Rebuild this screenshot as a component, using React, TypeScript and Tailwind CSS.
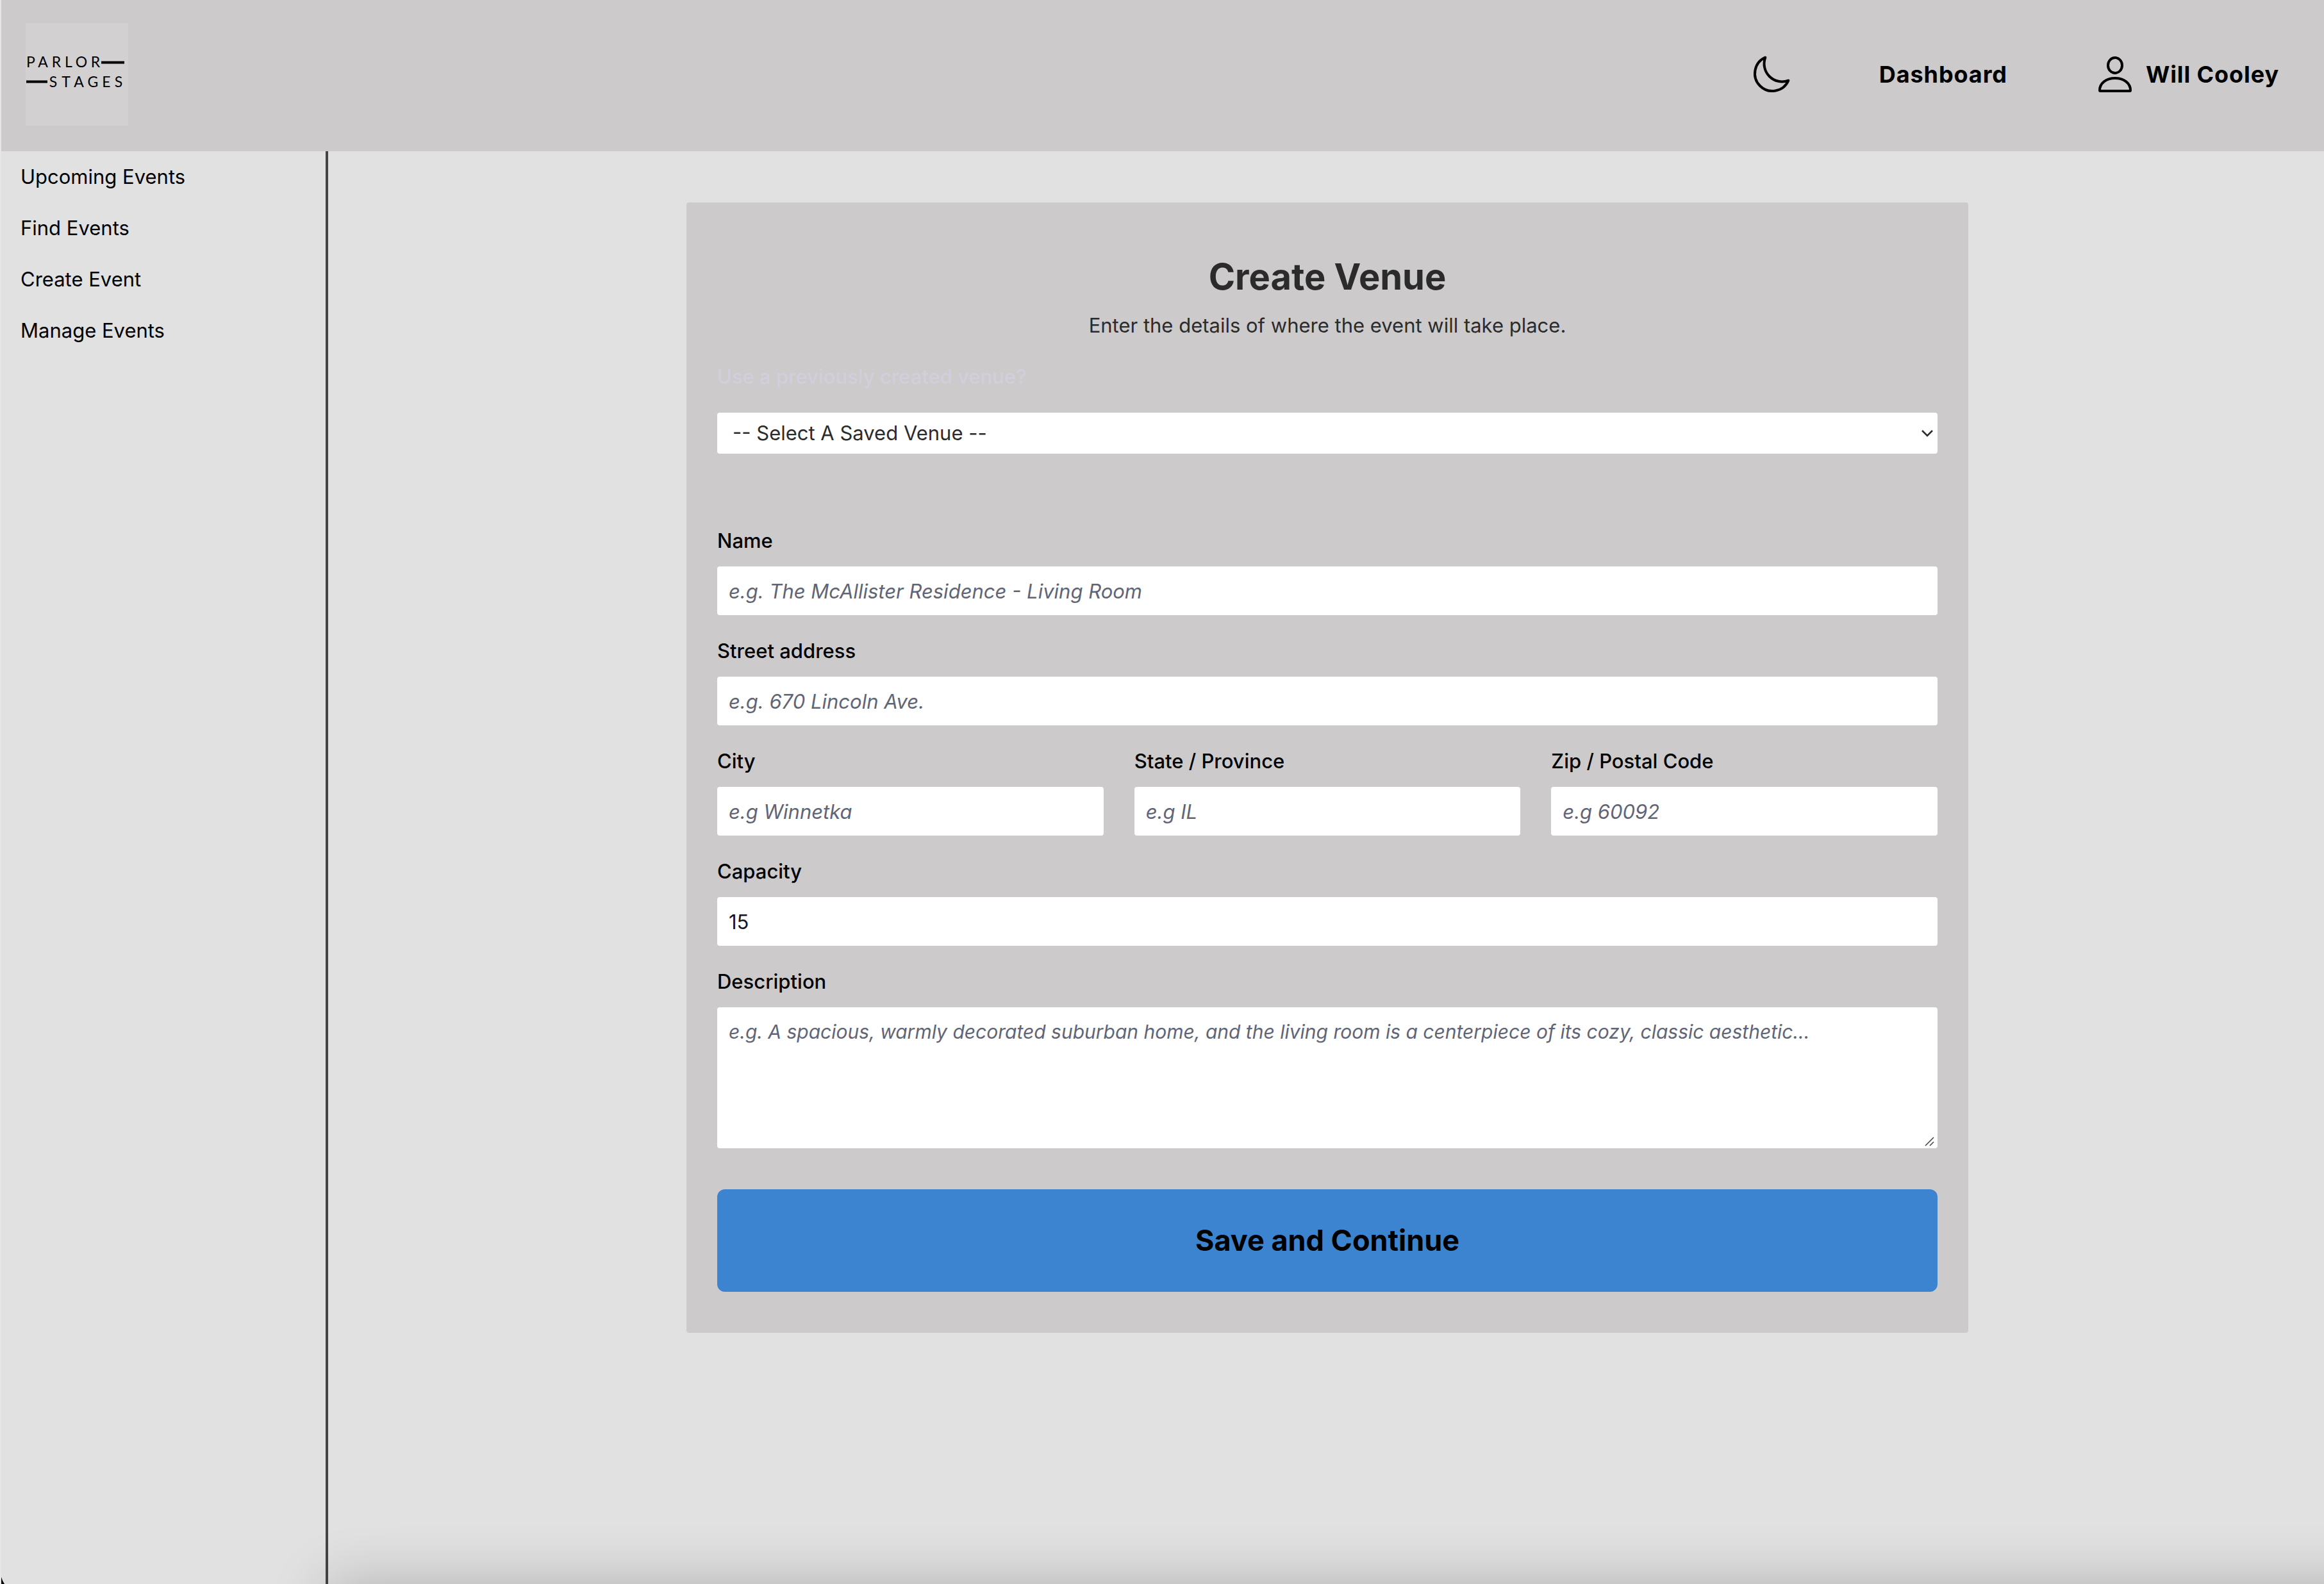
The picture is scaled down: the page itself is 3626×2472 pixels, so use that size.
import React, { useId } from "react";

const label = "block text-[31px] leading-[48px] font-medium text-black";
const box =
  "block w-full rounded bg-white px-[18px] leading-[48px] text-[#15152a] placeholder:italic placeholder:text-[#5f6577] placeholder:opacity-100 outline-none";

function Field(props: { title: string; placeholder?: string; value?: string }) {
  const id = useId();
  return (
    <div>
      <label htmlFor={id} className={label}>
        {props.title}
      </label>
      <input id={id} type="text" placeholder={props.placeholder} defaultValue={props.value} className={`mt-4 h-[76px] text-[31px] ${box}`} />
    </div>
  );
}

function Logo() {
  return (
    <svg viewBox="0 0 160 160" className="size-40 bg-[#d2d0d1]" role="img" aria-label="Parlor Stages">
      <g fontFamily="Lato, sans-serif" fontSize="23" fill="#000">
        {["P", "A", "R", "L", "O", "R"].map((c, i) => (
          <text key={i} x={[8, 27, 48, 67, 87, 109][i]} y="69" textAnchor="middle">{c}</text>
        ))}
        {["S", "T", "A", "G", "E", "S"].map((c, i) => (
          <text key={i} x={[43, 63, 83, 105, 126, 145][i]} y="100" textAnchor="middle">{c}</text>
        ))}
      </g>
      <path d="M118 61.500H154M1 91.500H34" stroke="#000" strokeWidth="4" />
    </svg>
  );
}

function MoonIcon() {
  return (
    <svg viewBox="0 0 64 64" className="size-16" fill="none" stroke="#000" strokeWidth="4" strokeLinecap="round" strokeLinejoin="round" aria-hidden="true">
      <path d="M22.300 5.700A27.300 27.300 0 1 0 58.300 41.700A28 28 0 0 1 22.300 5.700Z" />
    </svg>
  );
}

function UserIcon() {
  return (
    <svg viewBox="0 0 64 64" className="size-16" fill="none" stroke="#000" strokeWidth="4" strokeLinejoin="round" aria-hidden="true">
      <ellipse cx="32" cy="18" rx="11" ry="12" />
      <path d="M8 57C8 46 18 38 32 38S56 46 56 57Q56 58 55 58H9Q8 58 8 57Z" />
    </svg>
  );
}

export default function App() {
  return (
    <div className="relative flex min-h-screen flex-col overflow-hidden border-l-2 border-[#e6e6e6] bg-[#e1e1e1] font-[Inter,sans-serif] text-black">
      <header className="flex h-[236px] items-start justify-between bg-[#cccacb] pt-9 pr-[70px] pl-[38px]">
        <a href="#home"><Logo /></a>
        <nav className="flex h-40 items-center text-[36px] leading-[48px] font-bold tracking-wide">
          <button type="button" aria-label="Toggle dark mode" className="mr-[136px]"><MoonIcon /></button>
          <a href="#dashboard" className="mr-[136px]">Dashboard</a>
          <a href="#profile" className="flex items-center gap-4"><UserIcon />Will Cooley</a>
        </nav>
      </header>
      <div className="flex grow">
        <aside className="w-[510px] shrink-0 border-r-4 border-[#444] pt-4 pl-[30px]">
          <nav className="flex flex-col gap-8 text-[31px] leading-[48px]">
            <a href="#upcoming">Upcoming Events</a>
            <a href="#find">Find Events</a>
            <a href="#create">Create Event</a>
            <a href="#manage">Manage Events</a>
          </nav>
        </aside>
        <main className="flex grow justify-center pt-20 pl-1">
          <form className="flex w-full max-w-[2000px] flex-col self-start rounded bg-[#cccacb] px-12 pt-20 pb-16">
            <h1 className="text-center text-[56px] leading-[72px] font-bold text-[#2b2b2b]">Create Venue</h1>
            <p className="mt-4 text-center text-[31px] leading-[48px] text-[#2b2b2b]">Enter the details of where the event will take place.</p>
            <label htmlFor="saved" className="mt-8 text-[31px] leading-[48px] font-medium text-[#d1cfdb]">Use a previously created venue?</label>
            <div className="relative mt-8">
              <select id="saved" className="h-16 w-full appearance-none rounded bg-white px-6 text-[31px] text-[#2b2b2b]">
                <option>-- Select A Saved Venue --</option>
              </select>
              <svg viewBox="0 0 20 12" className="pointer-events-none absolute top-[26px] right-1.5 h-3 w-5" fill="none" stroke="#2b2b2b" strokeWidth="2.500" aria-hidden="true">
                <path d="M2 2l8 8 8-8" />
              </svg>
            </div>
            <div className="mt-28 flex flex-col gap-8">
              <Field title="Name" placeholder="e.g. The McAllister Residence - Living Room" />
              <Field title="Street address" placeholder="e.g. 670 Lincoln Ave." />
              <div className="grid grid-cols-3 gap-12">
                <Field title="City" placeholder="e.g Winnetka" />
                <Field title="State / Province" placeholder="e.g IL" />
                <Field title="Zip / Postal Code" placeholder="e.g 60092" />
              </div>
              <Field title="Capacity" value="15" />
              <div>
                <label htmlFor="description" className={label}>Description</label>
                <div className="relative mt-4">
                  <textarea id="description" className={`h-[220px] resize-none py-[14px] text-[30px] ${box}`} placeholder="e.g. A spacious, warmly decorated suburban home, and the living room is a centerpiece of its cozy, classic aesthetic..." />
                  <svg viewBox="0 0 16 16" className="pointer-events-none absolute right-1 bottom-0.5 size-4" stroke="#444" strokeWidth="1.500" aria-hidden="true">
                    <path d="M1 14L14 1M8 14l6-6" />
                  </svg>
                </div>
              </div>
            </div>
            <button type="button" className="mt-16 h-40 w-full rounded-xl bg-[#3c84d0] text-[45px] leading-[64px] font-bold">Save and Continue</button>
          </form>
        </main>
      </div>
      <div className="pointer-events-none absolute top-full -right-40 left-[510px] h-60 shadow-[0_0_90px_rgba(0,0,0,0.22)]" />
      <svg viewBox="0 0 8 24" className="pointer-events-none absolute bottom-0 -left-0.5 h-6 w-2" aria-hidden="true">
        <path d="M0 0Q1 16 7 24H0Z" fill="#000" />
      </svg>
    </div>
  );
}
